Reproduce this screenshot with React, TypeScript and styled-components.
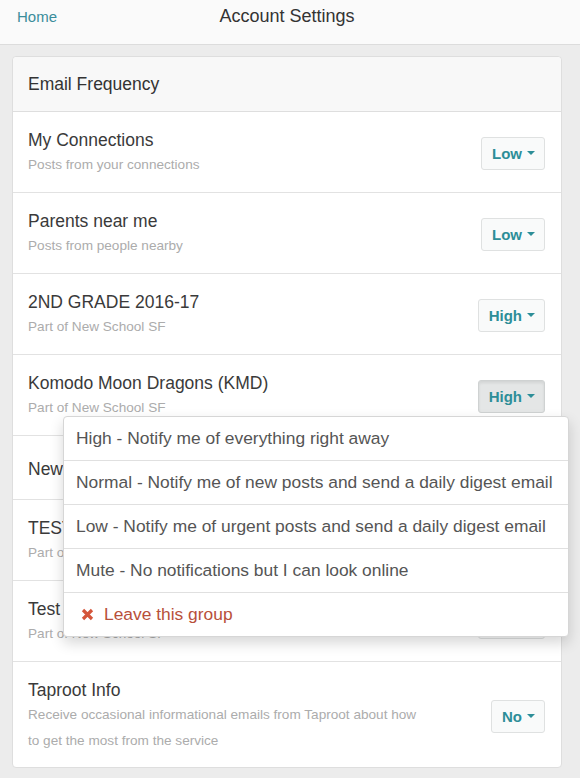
import React from 'react';
import styled, { createGlobalStyle } from 'styled-components';

const GlobalStyle = createGlobalStyle`
  html, body {
    margin: 0;
    padding: 0;
    background: #ececec;
    font-family: "Liberation Sans", Arial, sans-serif;
    color: #333;
  }
`;

const Page = styled.div`
  width: 580px;
  min-height: 778px;
  background: #ececec;
`;

const TopBar = styled.header`
  height: 44px;
  background: #fafafa;
  border-bottom: 1px solid #dcdcdc;
  display: grid;
  grid-template-columns: 1fr auto 1fr;
  align-items: start;
  padding: 0 23px 0 17px;
`;

const HomeLink = styled.a`
  font-size: 15px;
  line-height: 34px;
  color: #3a8d9b;
  text-decoration: none;
`;

const Title = styled.h1`
  margin: 0;
  font-size: 18px;
  font-weight: 400;
  line-height: 33px;
  color: #333;
`;

const Card = styled.section`
  margin: 11px 18px 0 12px;
  background: #fff;
  border: 1px solid #dedede;
  border-radius: 4px;
`;

const CardHead = styled.div`
  height: 54px;
  display: flex;
  align-items: center;
  padding: 0 15px;
  background: #f8f8f8;
  border-bottom: 1px solid #dedede;
  border-radius: 4px 4px 0 0;
  font-size: 17.5px;
  color: #333;
`;

const Row = styled.div`
  display: flex;
  align-items: center;
  justify-content: space-between;
  padding: 16px 16px 14px 15px;
  border-bottom: 1px solid #e2e2e2;
  &:last-child {
    border-bottom: none;
    padding-bottom: 13px;
  }
`;

const Info = styled.div`
  display: flex;
  flex-direction: column;
`;

const Name = styled.div`
  font-size: 17.5px;
  line-height: 24px;
  color: #3a3a3a;
`;

const Sub = styled.div<{ $wide?: boolean }>`
  font-size: 13.6px;
  line-height: 26px;
  color: #acacac;
  max-width: ${(p) => (p.$wide ? '400px' : 'none')};
`;

const Control = styled.div`
  position: relative;
  flex-shrink: 0;
`;

const Btn = styled.button<{ $active?: boolean }>`
  height: 33px;
  padding: 0 9px 0 10px;
  display: flex;
  align-items: center;
  gap: 5px;
  font-family: inherit;
  font-size: 15px;
  font-weight: 700;
  color: #2d8e98;
  background: ${(p) => (p.$active ? '#e4e6e6' : '#f9fafa')};
  border: 1px solid ${(p) => (p.$active ? '#cfd2d2' : '#dfe1e1')};
  border-radius: 3px;
  box-shadow: ${(p) => (p.$active ? 'inset 0 2px 3px rgba(0,0,0,0.08)' : 'none')};
`;

const Caret = styled.span`
  width: 0;
  height: 0;
  border-left: 4px solid transparent;
  border-right: 4px solid transparent;
  border-top: 4px solid #2d8e98;
`;

const Menu = styled.ul`
  position: absolute;
  top: 36px;
  right: -24px;
  width: 504px;
  margin: 0;
  padding: 0;
  list-style: none;
  background: #fff;
  border: 1px solid #d6d6d6;
  border-radius: 4px;
  box-shadow: 0 6px 14px rgba(0, 0, 0, 0.16);
  z-index: 10;
`;

const MenuItem = styled.li<{ $danger?: boolean }>`
  height: 43px;
  display: flex;
  align-items: center;
  gap: 10px;
  padding: 0 10px 0 ${(p) => (p.$danger ? '17px' : '12px')};
  font-size: 17.4px;
  color: ${(p) => (p.$danger ? '#b8503a' : '#555')};
  border-bottom: 1px solid #e0e0e0;
  white-space: nowrap;
  &:last-child {
    border-bottom: none;
  }
`;

const CrossIcon = () => (
  <svg width="13" height="13" viewBox="0 0 13 13">
    <path d="M2 2 L11 11 M11 2 L2 11" stroke="#d4553a" strokeWidth="3.2" strokeLinecap="butt" />
  </svg>
);

const levels = [
  'High - Notify me of everything right away',
  'Normal - Notify me of new posts and send a daily digest email',
  'Low - Notify me of urgent posts and send a daily digest email',
  'Mute - No notifications but I can look online',
];

type Item = { name: string; sub?: string; value: string; open?: boolean; wide?: boolean };

const items: Item[] = [
  { name: 'My Connections', sub: 'Posts from your connections', value: 'Low' },
  { name: 'Parents near me', sub: 'Posts from people nearby', value: 'Low' },
  { name: '2ND GRADE 2016-17', sub: 'Part of New School SF', value: 'High' },
  { name: 'Komodo Moon Dragons (KMD)', sub: 'Part of New School SF', value: 'High', open: true },
  { name: 'New School SF', value: 'High' },
  { name: 'TEST GROUP', sub: 'Part of New School SF', value: 'High' },
  { name: 'Test Group 2', sub: 'Part of New School SF', value: 'High' },
  {
    name: 'Taproot Info',
    sub: 'Receive occasional informational emails from Taproot about how to get the most from the service',
    value: 'No',
    wide: true,
  },
];

export default function App() {
  return (
    <Page>
      <GlobalStyle />
      <TopBar>
        <HomeLink href="#">Home</HomeLink>
        <Title>Account Settings</Title>
        <span />
      </TopBar>
      <Card>
        <CardHead>Email Frequency</CardHead>
        {items.map((it) => (
          <Row key={it.name}>
            <Info>
              <Name>{it.name}</Name>
              {it.sub && <Sub $wide={it.wide}>{it.sub}</Sub>}
            </Info>
            <Control>
              <Btn $active={it.open}>
                {it.value}
                <Caret />
              </Btn>
              {it.open && (
                <Menu>
                  {levels.map((l) => (
                    <MenuItem key={l}>{l}</MenuItem>
                  ))}
                  <MenuItem $danger>
                    <CrossIcon />
                    Leave this group
                  </MenuItem>
                </Menu>
              )}
            </Control>
          </Row>
        ))}
      </Card>
    </Page>
  );
}
